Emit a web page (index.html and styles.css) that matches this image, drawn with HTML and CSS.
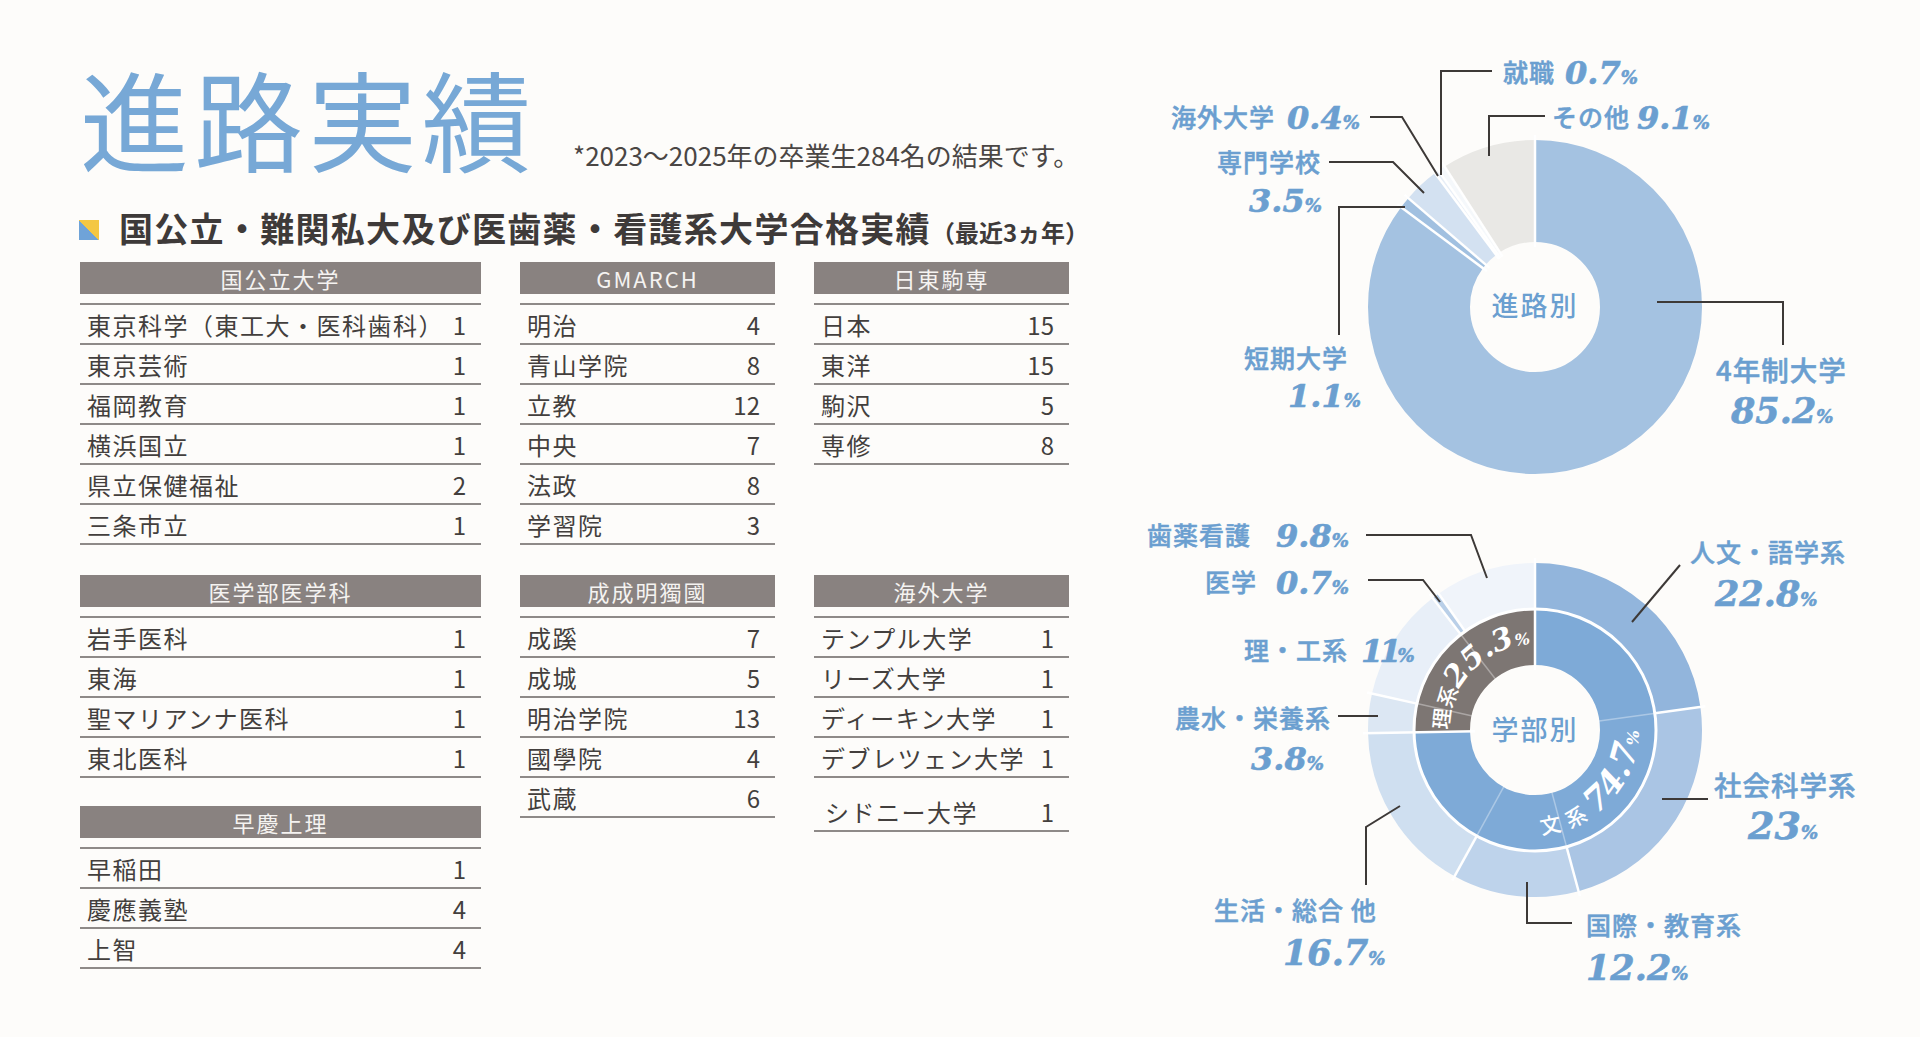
FILE: index.html
```html
<!DOCTYPE html>
<html lang="ja">
<head>
<meta charset="utf-8">
<title>進路実績</title>
<link rel="stylesheet" href="styles.css">
</head>
<body>
<div class="page">
  <section class="left">
    <header class="head">
      <h1 class="title">進路実績</h1>
      <p class="note">*2023〜2025年の卒業生284名の結果です。</p>
    </header>
    <h2 class="subtitle"><span class="mark"></span>国公立・難関私大及び医歯薬・看護系大学合格実績<small>（最近3ヵ年）</small></h2>
    <div class="tables">
      <div class="tbl">
        <div class="tbl-h">国公立大学</div>
        <div class="tbl-b">
          <div class="row"><span>東京科学（東工大・医科歯科）</span><span class="n">1</span></div>
          <div class="row"><span>東京芸術</span><span class="n">1</span></div>
          <div class="row"><span>福岡教育</span><span class="n">1</span></div>
          <div class="row"><span>横浜国立</span><span class="n">1</span></div>
          <div class="row"><span>県立保健福祉</span><span class="n">2</span></div>
          <div class="row"><span>三条市立</span><span class="n">1</span></div>
        </div>
      </div>
      <div class="tbl">
        <div class="tbl-h">GMARCH</div>
        <div class="tbl-b">
          <div class="row"><span>明治</span><span class="n">4</span></div>
          <div class="row"><span>青山学院</span><span class="n">8</span></div>
          <div class="row"><span>立教</span><span class="n">12</span></div>
          <div class="row"><span>中央</span><span class="n">7</span></div>
          <div class="row"><span>法政</span><span class="n">8</span></div>
          <div class="row"><span>学習院</span><span class="n">3</span></div>
        </div>
      </div>
      <div class="tbl">
        <div class="tbl-h">日東駒専</div>
        <div class="tbl-b">
          <div class="row"><span>日本</span><span class="n">15</span></div>
          <div class="row"><span>東洋</span><span class="n">15</span></div>
          <div class="row"><span>駒沢</span><span class="n">5</span></div>
          <div class="row"><span>専修</span><span class="n">8</span></div>
        </div>
      </div>
      <div class="stack">
        <div class="tbl">
          <div class="tbl-h">医学部医学科</div>
          <div class="tbl-b">
            <div class="row"><span>岩手医科</span><span class="n">1</span></div>
            <div class="row"><span>東海</span><span class="n">1</span></div>
            <div class="row"><span>聖マリアンナ医科</span><span class="n">1</span></div>
            <div class="row"><span>東北医科</span><span class="n">1</span></div>
          </div>
        </div>
        <div class="tbl">
          <div class="tbl-h">早慶上理</div>
          <div class="tbl-b">
            <div class="row"><span>早稲田</span><span class="n">1</span></div>
            <div class="row"><span>慶應義塾</span><span class="n">4</span></div>
            <div class="row"><span>上智</span><span class="n">4</span></div>
          </div>
        </div>
      </div>
      <div class="tbl">
        <div class="tbl-h">成成明獨國</div>
        <div class="tbl-b">
          <div class="row"><span>成蹊</span><span class="n">7</span></div>
          <div class="row"><span>成城</span><span class="n">5</span></div>
          <div class="row"><span>明治学院</span><span class="n">13</span></div>
          <div class="row"><span>國學院</span><span class="n">4</span></div>
          <div class="row"><span>武蔵</span><span class="n">6</span></div>
        </div>
      </div>
      <div class="tbl">
        <div class="tbl-h">海外大学</div>
        <div class="tbl-b">
          <div class="row"><span>テンプル大学</span><span class="n">1</span></div>
          <div class="row"><span>リーズ大学</span><span class="n">1</span></div>
          <div class="row"><span>ディーキン大学</span><span class="n">1</span></div>
          <div class="row"><span>デブレツェン大学</span><span class="n">1</span></div>
          <div class="row tall"><span class="ind">シドニー大学</span><span class="n">1</span></div>
        </div>
      </div>
    </div>
  </section>

  <svg class="chart" viewBox="1080 0 840 1037" xmlns="http://www.w3.org/2000/svg">
    <defs>
      <path id="arcRi" d="M1449.2 736 A86 86 0 0 1 1535 644"/>
      <path id="arcBun" d="M1538.6 833.9 A104 104 0 0 0 1637.4 712"/>
    </defs>

    <!-- chart 1 : 進路別 -->
    <g transform="rotate(-90 1535 307)" fill="none" stroke-width="102">
      <circle cx="1535" cy="307" r="116" pathLength="100" stroke="#a4c2e1" stroke-dasharray="85.2 100" stroke-dashoffset="0"/>
      <circle cx="1535" cy="307" r="116" pathLength="100" stroke="#a1c0e0" stroke-dasharray="1.1 100" stroke-dashoffset="-85.2"/>
      <circle cx="1535" cy="307" r="116" pathLength="100" stroke="#d3e1f1" stroke-dasharray="3.5 100" stroke-dashoffset="-86.3"/>
      <circle cx="1535" cy="307" r="116" pathLength="100" stroke="#e7eef7" stroke-dasharray="0.4 100" stroke-dashoffset="-89.8"/>
      <circle cx="1535" cy="307" r="116" pathLength="100" stroke="#f5f8fb" stroke-dasharray="0.7 100" stroke-dashoffset="-90.2"/>
      <circle cx="1535" cy="307" r="116" pathLength="100" stroke="#e9e8e5" stroke-dasharray="9.1 100" stroke-dashoffset="-90.9"/>
    </g>
    <g class="sep">
      <line x1="1535" y1="247" x2="1535" y2="135"/>
      <line x1="1535" y1="247" x2="1535" y2="135" transform="rotate(306.72 1535 307)"/>
      <line x1="1535" y1="247" x2="1535" y2="135" transform="rotate(310.68 1535 307)"/>
      <line x1="1535" y1="247" x2="1535" y2="135" transform="rotate(323.28 1535 307)"/>
      <line x1="1535" y1="247" x2="1535" y2="135" transform="rotate(324.72 1535 307)"/>
      <line x1="1535" y1="247" x2="1535" y2="135" transform="rotate(327.24 1535 307)"/>
    </g>
    <text class="ctr" x="1535" y="316">進路別</text>

    <polyline class="ld" points="1492,71 1441,71 1441,175"/>
    <polyline class="ld" points="1545,116 1489,116 1489,156"/>
    <polyline class="ld" points="1370,117 1402,117 1438,176"/>
    <polyline class="ld" points="1329,162 1393,162 1424,193"/>
    <polyline class="ld" points="1405,207 1339,207 1339,335"/>
    <polyline class="ld" points="1657,302 1783,302 1783,345"/>

    <text class="lbl" x="1503" y="82">就職</text>
    <text class="num" x="1565" y="84">0.7<tspan class="pc">%</tspan></text>
    <text class="lbl" x="1552" y="127">その他</text>
    <text class="num" x="1637" y="129">9.1<tspan class="pc">%</tspan></text>
    <text class="lbl" x="1171" y="127">海外大学</text>
    <text class="num" x="1287" y="129">0.4<tspan class="pc">%</tspan></text>
    <text class="lbl" x="1217" y="172">専門学校</text>
    <text class="num" x="1249" y="212">3.5<tspan class="pc">%</tspan></text>
    <text class="lbl" x="1244" y="368">短期大学</text>
    <text class="num" x="1288" y="407">1.1<tspan class="pc">%</tspan></text>
    <text class="lbl lg" x="1716" y="381">4年制大学</text>
    <text class="num big" x="1731" y="423">85.2<tspan class="pc">%</tspan></text>

    <!-- chart 2 : 学部別 -->
    <g transform="rotate(-90 1535 730)" fill="none">
      <g stroke-width="56">
        <circle cx="1535" cy="730" r="93" pathLength="100" stroke="#7eaad7" stroke-dasharray="74.7 100" stroke-dashoffset="0"/>
        <circle cx="1535" cy="730" r="93" pathLength="100" stroke="#7d7673" stroke-dasharray="25.3 100" stroke-dashoffset="-74.7"/>
      </g>
      <g stroke-width="46">
        <circle cx="1535" cy="730" r="144" pathLength="100" stroke="#92b5dc" stroke-dasharray="22.8 100" stroke-dashoffset="0"/>
        <circle cx="1535" cy="730" r="144" pathLength="100" stroke="#aac5e4" stroke-dasharray="23 100" stroke-dashoffset="-22.8"/>
        <circle cx="1535" cy="730" r="144" pathLength="100" stroke="#bed3eb" stroke-dasharray="12.2 100" stroke-dashoffset="-45.8"/>
        <circle cx="1535" cy="730" r="144" pathLength="100" stroke="#cfdff0" stroke-dasharray="16.7 100" stroke-dashoffset="-58"/>
        <circle cx="1535" cy="730" r="144" pathLength="100" stroke="#dce7f3" stroke-dasharray="3.8 100" stroke-dashoffset="-74.7"/>
        <circle cx="1535" cy="730" r="144" pathLength="100" stroke="#e8eff8" stroke-dasharray="11 100" stroke-dashoffset="-78.5"/>
        <circle cx="1535" cy="730" r="144" pathLength="100" stroke="#b9cfe8" stroke-dasharray="0.7 100" stroke-dashoffset="-89.5"/>
        <circle cx="1535" cy="730" r="144" pathLength="100" stroke="#f0f4fa" stroke-dasharray="9.8 100" stroke-dashoffset="-90.2"/>
      </g>
    </g>
    <circle class="ring" cx="1535" cy="730" r="121"/>
    <g class="sep">
      <line x1="1535" y1="670" x2="1535" y2="558"/>
      <line x1="1535" y1="670" x2="1535" y2="558" transform="rotate(268.92 1535 730)"/>
      <line x1="1535" y1="609" x2="1535" y2="558" transform="rotate(82.08 1535 730)"/>
      <line x1="1535" y1="609" x2="1535" y2="558" transform="rotate(164.88 1535 730)"/>
      <line x1="1535" y1="609" x2="1535" y2="558" transform="rotate(208.8 1535 730)"/>
      <line x1="1535" y1="609" x2="1535" y2="558" transform="rotate(282.6 1535 730)"/>
      <line x1="1535" y1="609" x2="1535" y2="558" transform="rotate(322.2 1535 730)"/>
      <line x1="1535" y1="609" x2="1535" y2="558" transform="rotate(324.72 1535 730)"/>
    </g>
    <g class="sep-f">
      <line x1="1535" y1="667" x2="1535" y2="610" transform="rotate(82.08 1535 730)"/>
      <line x1="1535" y1="667" x2="1535" y2="610" transform="rotate(164.88 1535 730)"/>
      <line x1="1535" y1="667" x2="1535" y2="610" transform="rotate(208.8 1535 730)"/>
      <line x1="1535" y1="667" x2="1535" y2="610" transform="rotate(282.6 1535 730)"/>
      <line x1="1535" y1="667" x2="1535" y2="610" transform="rotate(322.2 1535 730)"/>
    </g>
    <text class="ctr" x="1535" y="740">学部別</text>

    <text class="arc-t"><textPath href="#arcRi" startOffset="6"><tspan class="arc-j">理系</tspan><tspan class="arc-n">25.3</tspan><tspan class="arc-p">%</tspan></textPath></text>
    <text class="arc-t"><textPath href="#arcBun" startOffset="3"><tspan class="arc-j wide">文系</tspan><tspan class="arc-n big">74.7</tspan><tspan class="arc-p">%</tspan></textPath></text>

    <polyline class="ld" points="1366,535 1471,535 1487,578"/>
    <polyline class="ld" points="1368,580 1423,580 1440,602"/>
    <polyline class="ld" points="1338,716 1378,716"/>
    <polyline class="ld" points="1400,806 1366,827 1366,885"/>
    <polyline class="ld" points="1527,882 1527,923 1572,923"/>
    <polyline class="ld" points="1662,799 1708,799"/>
    <polyline class="ld" points="1632,622 1680,565"/>

    <text class="lbl" x="1147" y="545">歯薬看護</text>
    <text class="num" x="1276" y="547">9.8<tspan class="pc">%</tspan></text>
    <text class="lbl" x="1205" y="592">医学</text>
    <text class="num" x="1276" y="594">0.7<tspan class="pc">%</tspan></text>
    <text class="lbl" x="1244" y="660">理・工系</text>
    <text class="num tight" x="1361" y="662">11<tspan class="pc">%</tspan></text>
    <text class="lbl" x="1175" y="728">農水・栄養系</text>
    <text class="num" x="1251" y="770">3.8<tspan class="pc">%</tspan></text>
    <text class="lbl" x="1214" y="920">生活・総合 他</text>
    <text class="num big" x="1283" y="965">16.7<tspan class="pc">%</tspan></text>
    <text class="lbl" x="1586" y="935">国際・教育系</text>
    <text class="num big" x="1586" y="980">12.2<tspan class="pc">%</tspan></text>
    <text class="lbl lg" x="1714" y="796">社会科学系</text>
    <text class="num bigger" x="1748" y="839">23<tspan class="pc">%</tspan></text>
    <text class="lbl" x="1690" y="562">人文・語学系</text>
    <text class="num big" x="1715" y="606">22.8<tspan class="pc">%</tspan></text>
  </svg>
</div>
</body>
</html>
```

FILE: styles.css
```css
* { box-sizing: border-box; }
html, body { margin: 0; padding: 0; }
body {
  background: #fdfcfa;
  font-family: "Noto Sans CJK JP", "Noto Sans", sans-serif;
  color: #433f3d;
  width: 1920px;
  height: 1037px;
  overflow: hidden;
}
.page { display: flex; width: 1920px; height: 1037px; }
.left { flex: 0 0 1080px; width: 1080px; min-width: 0; padding: 62px 0 0 80px; }

.head { display: flex; align-items: flex-end; gap: 37px; }
.title {
  margin: 0;
  font-size: 109px;
  line-height: 1;
  font-weight: 400;
  color: #77a8d6;
  letter-spacing: 5px;
  white-space: nowrap;
}
.note {
  margin: 0 0 1px;
  font-size: 26px;
  line-height: 30px;
  color: #4a4644;
  white-space: nowrap;
}

.subtitle {
  margin: 37px 0 0;
  display: flex;
  align-items: baseline;
  font-size: 34px;
  line-height: 40px;
  font-weight: 700;
  color: #3e3a39;
  letter-spacing: 1.3px;
  white-space: nowrap;
}
.mark {
  align-self: center;
  flex: 0 0 20px;
  width: 20px;
  height: 20px;
  margin: 0 20px 0 -1px;
  background: linear-gradient(to top right, #6fa3d8 50%, #f4c743 50%);
}
.subtitle small { font-size: 24px; letter-spacing: 0; }

.tables {
  margin-top: 10px;
  display: grid;
  grid-template-columns: 401px 255px 255px;
  column-gap: 39px;
  row-gap: 30px;
  align-items: start;
}
.stack { display: flex; flex-direction: column; gap: 28px; }

.tbl-h {
  height: 32px;
  background: #898280;
  color: #f5f3f1;
  font-size: 22px;
  letter-spacing: 2px;
  display: flex;
  align-items: center;
  justify-content: center;
}
.tbl-b { margin-top: 9px; border-top: 2px solid #8e8a88; }
.row {
  height: 40px;
  border-bottom: 2px solid #8e8a88;
  display: flex;
  align-items: center;
  justify-content: space-between;
  padding: 0 15px 0 7px;
  font-size: 24px;
  letter-spacing: 1.5px;
  white-space: nowrap;
}
.row .n { letter-spacing: 0; }
.row.tall { height: 54px; padding-top: 14px; }
.row .ind { padding-left: 4px; }

.chart { flex: 0 0 840px; width: 840px; height: 1037px; display: block; }

.sep line { stroke: #ffffff; stroke-width: 2.5; }
.sep-f line { stroke: rgba(255, 255, 255, 0.35); stroke-width: 1.5; }
.ring { fill: none; stroke: #ffffff; stroke-width: 3; }
.ld { fill: none; stroke: #3d3937; stroke-width: 2; }

.lbl {
  font-family: "Noto Sans CJK JP", sans-serif;
  font-size: 25px;
  font-weight: 500;
  fill: #6b9fd0;
  stroke: #6b9fd0;
  stroke-width: 0.5px;
  letter-spacing: 1px;
}
.lbl.lg { font-size: 27.5px; }
.num {
  font-family: "DejaVu Serif", serif;
  font-style: italic;
  font-weight: 700;
  font-size: 32px;
  fill: #6b9fd0;
  stroke: #6b9fd0;
  stroke-width: 0.6px;
}
.num.big { font-size: 35px; }
.num.bigger { font-size: 38px; }
.num.tight { letter-spacing: -4px; }
.pc { font-size: 18px; letter-spacing: 0; }
.ctr {
  font-family: "Noto Sans CJK JP", sans-serif;
  font-size: 27px;
  font-weight: 500;
  fill: #6b9fd0;
  text-anchor: middle;
  letter-spacing: 2px;
}
.arc-t { fill: #ffffff; }
.arc-j { font-family: "Noto Sans CJK JP", sans-serif; font-size: 21px; font-weight: 500; }
.arc-j.wide { letter-spacing: 8px; }
.arc-n { font-family: "DejaVu Serif", serif; font-style: italic; font-weight: 700; font-size: 30px; }
.arc-n.big { font-size: 34px; }
.arc-p { font-family: "DejaVu Serif", serif; font-style: italic; font-weight: 700; font-size: 16px; }
```
